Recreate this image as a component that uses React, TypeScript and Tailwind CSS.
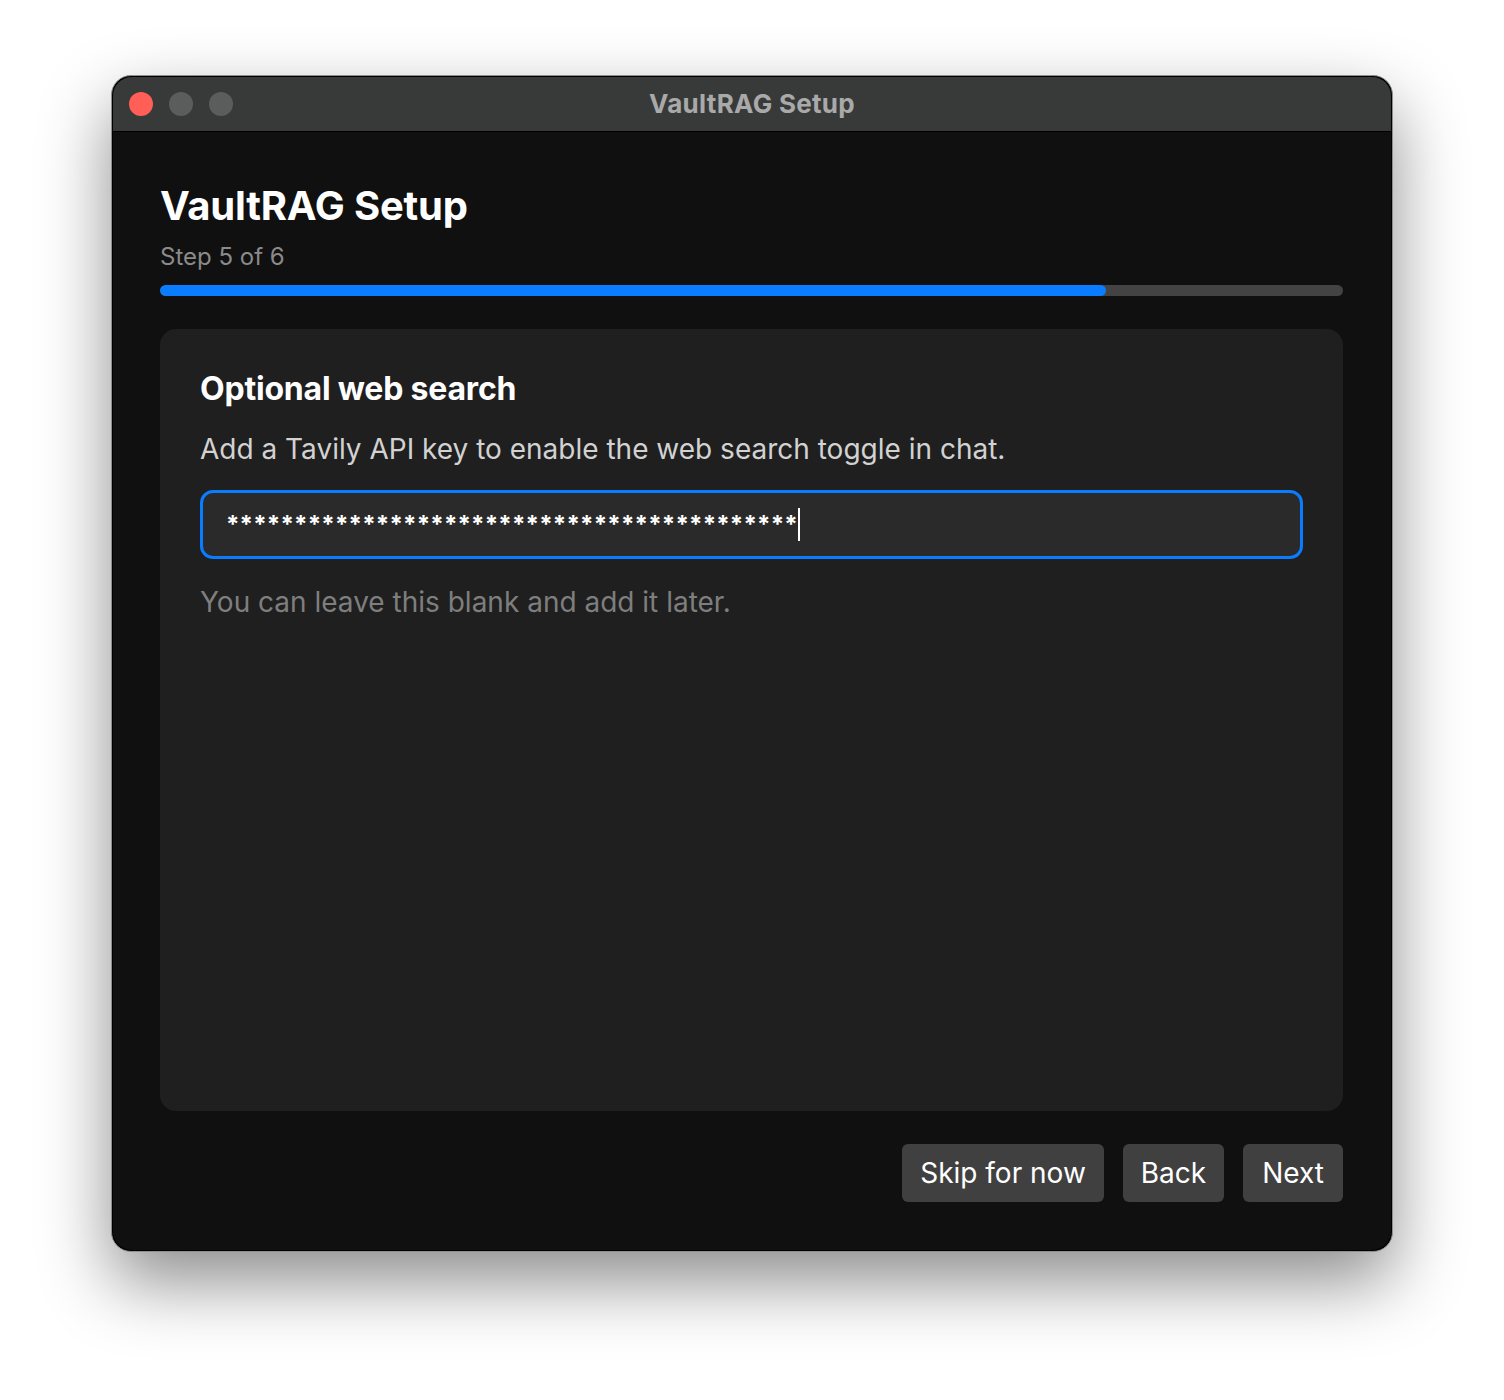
import React from 'react'

const font = { fontFamily: 'Inter, "Noto Sans", sans-serif' }

function TrafficLights() {
  return (
    <div className="absolute left-[16px] top-[15px] flex gap-[16px]">
      <span className="w-[24px] h-[24px] rounded-full bg-[#ff5f57]" />
      <span className="w-[24px] h-[24px] rounded-full bg-[#5b5c5c]" />
      <span className="w-[24px] h-[24px] rounded-full bg-[#5b5c5c]" />
    </div>
  )
}

export default function App() {
  const masked = '*'.repeat(42)
  return (
    <div className="min-h-screen bg-white pt-[75px] pl-[111px]" style={font}>
      {/* Window */}
      <div className="w-[1282px] h-[1177px] rounded-[20px] border border-[#8e8e8e] bg-black p-px shadow-[0_30px_70px_rgba(0,0,0,0.45)]">
        <div className="h-full rounded-[19px] overflow-hidden bg-[#101010] flex flex-col">
          {/* Title bar */}
          <div className="relative h-[55px] bg-[#383a3a] border-b border-black flex items-center justify-center pb-[2px]">
            <TrafficLights />
            <span className="text-[26px] font-bold text-[#a9a9a9] tracking-[0.3px]">VaultRAG Setup</span>
          </div>

          {/* Body */}
          <div className="flex-1 flex flex-col pl-[47px] pr-[48px] pt-[46px] pb-[48px]">
            <h1 className="text-[40px] leading-[56px] font-bold text-white tracking-[-0.2px]">VaultRAG Setup</h1>
            <p className="mt-[7px] text-[24px] leading-[32px] text-[#8a8a8a]">Step 5 of 6</p>
            <div className="mt-[12px] h-[11px] rounded-full bg-[#434343] overflow-hidden">
              <div className="h-full w-[80%] rounded-full bg-[#0a7cff]" />
            </div>

            {/* Card */}
            <div className="mt-[33px] flex-1 rounded-[16px] bg-[#1f1f1f] px-[40px] pt-[38px]">
              <h2 className="text-[32px] leading-[44px] font-bold text-white tracking-[-0.2px]">Optional web search</h2>
              <p className="mt-[19px] text-[28px] leading-[38px] text-[#d2d2d2]">
                Add a Tavily API key to enable the web search toggle in chat.
              </p>
              <div className="mt-[22px] h-[69px] rounded-[13px] border-[3px] border-[#0a7cff] bg-[#2a2a2a] flex items-center pl-[23px]">
                <span className="text-[24px] font-bold text-white tracking-[0.2px] leading-none">{masked}</span>
                <span className="w-[2px] h-[33px] bg-white" />
              </div>
              <p className="mt-[24px] text-[28px] leading-[38px] text-[#7e7e7e]">
                You can leave this blank and add it later.
              </p>
            </div>

            {/* Footer buttons */}
            <div className="mt-[33px] flex justify-end gap-[19px]">
              <button className="h-[58px] px-[18px] rounded-[6px] bg-[#404040] text-[28px] text-white">Skip for now</button>
              <button className="h-[58px] px-[18px] rounded-[6px] bg-[#404040] text-[28px] text-white">Back</button>
              <button className="h-[58px] px-[19px] rounded-[6px] bg-[#404040] text-[28px] text-white">Next</button>
            </div>
          </div>
        </div>
      </div>
    </div>
  )
}
